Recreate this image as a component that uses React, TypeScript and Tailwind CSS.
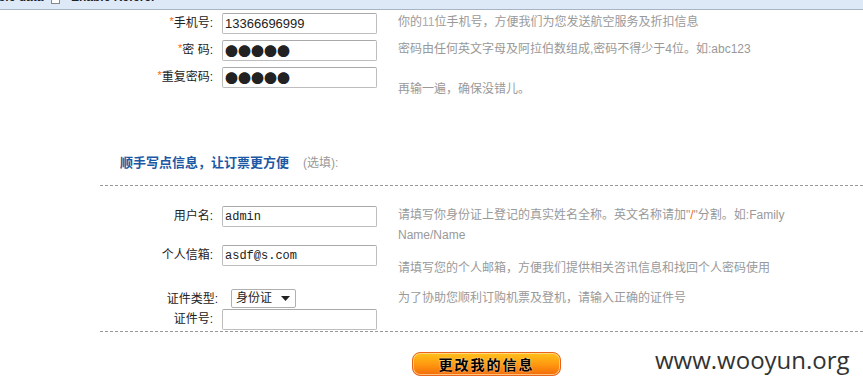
import React from "react";

const inputCls =
  "h-[21px] w-[155px] border border-[#bdbdbd] border-t-[#a9a9a9] rounded-[2px] bg-white px-[2px] outline-none text-[#222]";

function Label({ children, req, w = "w-[213px]" }: { children: React.ReactNode; req?: boolean; w?: string }) {
  return (
    <div className={`${w} shrink-0 text-right h-[21px] leading-[21px] text-[12px] text-[#222]`}>
      {req && <span className="text-[#ff6600] text-[11px] relative top-[-2px]">*</span>}
      {children}
    </div>
  );
}

export default function App() {
  return (
    <div className="relative w-[863px] h-[389px] overflow-hidden bg-white [font-family:'Liberation_Sans','Noto_Sans_CJK_SC',sans-serif] text-[12px]">
      {/* top toolbar (cut off) */}
      <div className="h-[10px] bg-[#dde9f7] border-b border-[#a6b4c6] overflow-hidden">
        <div className="flex items-end h-[14px] -mt-[10px] text-[12px] leading-[14px] text-[#222] font-bold">
          <span className="w-[53px] -ml-[2px]">ble data</span>
          <span className="w-[9px] h-[12px] border border-[#888] bg-white"></span>
          <span className="ml-[11px]">Enable Referer</span>
        </div>
      </div>

      {/* row 1 */}
      <div className="flex items-start mt-[3px]">
        <Label req>手机号:</Label>
        <input readOnly defaultValue="13366696999" className={`${inputCls} ml-[9px] text-[13px]`} />
        <div className="ml-[21px] h-[21px] leading-[19px] text-[#999]">
          你的<span className="text-[#aab]">11</span>位手机号，方便我们为您发送航空服务及折扣信息
        </div>
      </div>

      {/* row 2 */}
      <div className="flex items-start mt-[6px]">
        <Label req>密 码:</Label>
        <input
          readOnly
          defaultValue="●●●●●"
          className={`${inputCls} ml-[9px] text-[13px] [font-family:'Noto_Sans_CJK_SC',sans-serif] leading-[19px]`}
        />
        <div className="ml-[21px] h-[21px] leading-[19px] text-[#999]">
          密码由任何英文字母及阿拉伯数组成,密码不得少于4位。如:abc123
        </div>
      </div>

      {/* row 3 */}
      <div className="flex items-start mt-[6px]">
        <Label req>重复密码:</Label>
        <input
          readOnly
          defaultValue="●●●●●"
          className={`${inputCls} ml-[9px] text-[13px] [font-family:'Noto_Sans_CJK_SC',sans-serif] leading-[19px]`}
        />
        <div className="ml-[21px] mt-[14px] leading-[16px] text-[#999]">再输一遍，确保没错儿。</div>
      </div>

      {/* section heading */}
      <div className="flex items-center mt-[58px] pl-[120px] h-[16px] leading-[16px]">
        <span className="font-bold text-[13px] text-[#1c58a4]">顺手写点信息，让订票更方便</span>
        <span className="ml-[14px] text-[#999] text-[12px]">(选填):</span>
      </div>

      <div className="ml-[100px] mt-[14px] border-t border-dashed border-[#999]"></div>

      {/* username */}
      <div className="flex items-start mt-[20px]">
        <Label>用户名:</Label>
        <input readOnly defaultValue="admin" className={`${inputCls} ml-[9px] text-[12px] [font-family:'Liberation_Mono',monospace]`} />
        <div className="ml-[21px] w-[420px] leading-[20px] text-[#999] -mt-[1px]">
          请填写你身份证上登记的真实姓名全称。英文名称请加"<span className="text-[#ff6600]">/</span>"分割。如:Family
          <br />
          Name/Name
        </div>
      </div>

      {/* email */}
      <div className="flex items-start">
        <Label>个人信箱:</Label>
        <input readOnly defaultValue="asdf@s.com" className={`${inputCls} ml-[9px] text-[12px] [font-family:'Liberation_Mono',monospace]`} />
        <div className="ml-[21px] mt-[13px] leading-[20px] text-[#999]">
          请填写您的个人邮箱，方便我们提供相关咨讯信息和找回个人密码使用
        </div>
      </div>

      {/* id type */}
      <div className="flex items-start mt-[11px]">
        <div className="w-[218px] shrink-0 text-right h-[19px] leading-[20px] text-[12px] text-[#222]">证件类型:</div>
        <div className="ml-[13px] w-[65px] h-[19px] border border-[#b0b0b0] rounded-[2px] bg-white flex items-center pl-[4px] text-[12px] text-[#222]">
          <span className="leading-[17px]">身份证</span>
          <svg width="9" height="5" viewBox="0 0 9 5" className="ml-[9px]">
            <path d="M0 0h9L4.5 5z" fill="#222" />
          </svg>
        </div>
        <div className="ml-[102px] -mt-[1px] leading-[20px] text-[#999]">为了协助您顺利订购机票及登机，请输入正确的证件号</div>
      </div>

      {/* id number */}
      <div className="flex items-start mt-[1px]">
        <Label>证件号:</Label>
        <input readOnly defaultValue="" className={`${inputCls} ml-[9px]`} />
      </div>

      <div className="ml-[100px] mt-[1px] border-t border-dashed border-[#999]"></div>

      {/* button */}
      <div className="mt-[20px] pl-[412px]">
        <button className="w-[149px] h-[24px] rounded-[8px] border border-[#e8641a] bg-gradient-to-b from-[#ffc21a] via-[#ff9a10] to-[#f36a0a] shadow-[inset_0_0_0_1px_rgba(255,230,170,0.7)] flex items-center justify-center">
          <span className="font-bold text-[14px] tracking-[2px] text-black [font-family:'Noto_Sans_CJK_SC',sans-serif] [text-shadow:0_0_2px_rgba(255,255,255,0.8)]">
            更改我的信息
          </span>
        </button>
      </div>

      {/* watermark */}
      <div className="absolute left-[655px] top-[344px] text-[24px] leading-[32px] text-[#333] [font-family:'Open_Sans',sans-serif]">
        www.wooyun.org
      </div>
    </div>
  );
}
